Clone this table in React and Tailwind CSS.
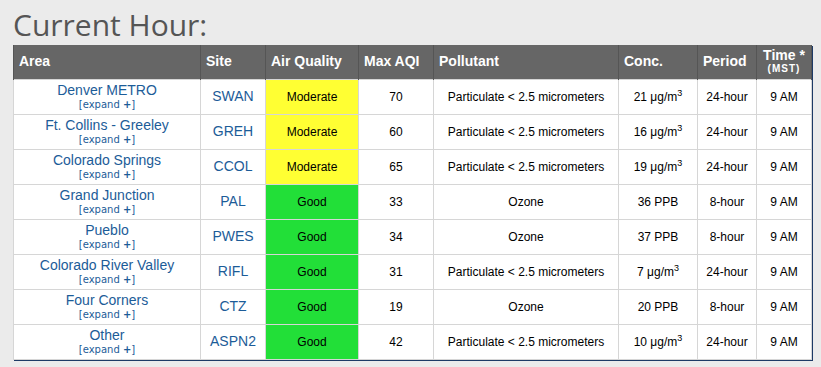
import React from 'react';

const rows = [
  { area: 'Denver METRO', site: 'SWAN', aq: 'Moderate', aqi: 70, pol: 'Particulate < 2.5 micrometers', conc: '21', unit: 'ug', period: '24-hour' },
  { area: 'Ft. Collins - Greeley', site: 'GREH', aq: 'Moderate', aqi: 60, pol: 'Particulate < 2.5 micrometers', conc: '16', unit: 'ug', period: '24-hour' },
  { area: 'Colorado Springs', site: 'CCOL', aq: 'Moderate', aqi: 65, pol: 'Particulate < 2.5 micrometers', conc: '19', unit: 'ug', period: '24-hour' },
  { area: 'Grand Junction', site: 'PAL', aq: 'Good', aqi: 33, pol: 'Ozone', conc: '36', unit: 'ppb', period: '8-hour' },
  { area: 'Pueblo', site: 'PWES', aq: 'Good', aqi: 34, pol: 'Ozone', conc: '37', unit: 'ppb', period: '8-hour' },
  { area: 'Colorado River Valley', site: 'RIFL', aq: 'Good', aqi: 31, pol: 'Particulate < 2.5 micrometers', conc: '7', unit: 'ug', period: '24-hour' },
  { area: 'Four Corners', site: 'CTZ', aq: 'Good', aqi: 19, pol: 'Ozone', conc: '20', unit: 'ppb', period: '8-hour' },
  { area: 'Other', site: 'ASPN2', aq: 'Good', aqi: 42, pol: 'Particulate < 2.5 micrometers', conc: '10', unit: 'ug', period: '24-hour' },
];

const th = 'h-[34px] p-0 pl-[5px] text-left align-middle font-bold text-[14px] text-white border-x border-[#555]';
const td = 'h-[35px] p-0 text-center align-middle border border-[#d6d6d6]';

export default function App() {
  return (
    <div className="w-[821px] h-[367px] bg-[#ebebeb] px-[13px] pt-[10px] font-['Liberation_Sans',Arial,sans-serif]">
      <h1 className="h-[30px] leading-[30px] mb-[5px] text-[30px] text-[#555] font-['Open_Sans',sans-serif]">
        Current Hour:
      </h1>

      <table className="w-[798px] table-fixed border-collapse bg-white shadow-[1px_1px_0_#1e3a66]">
        <colgroup>
          <col className="w-[187px]" />
          <col className="w-[65px]" />
          <col className="w-[93px]" />
          <col className="w-[75px]" />
          <col className="w-[185px]" />
          <col className="w-[79px]" />
          <col className="w-[59px]" />
          <col className="w-[55px]" />
        </colgroup>
        <thead>
          <tr className="bg-[#666]">
            <th className={th}>Area</th>
            <th className={th}>Site</th>
            <th className={th}>Air Quality</th>
            <th className={th}>Max AQI</th>
            <th className={th}>Pollutant</th>
            <th className={th}>Conc.</th>
            <th className={th}>Period</th>
            <th className="h-[34px] p-0 text-center align-middle font-bold text-white border-x border-[#555]">
              <div className="text-[14px] leading-[15px]">Time *</div>
              <div className="text-[10px] leading-[12px] tracking-[1px]">(MST)</div>
            </th>
          </tr>
        </thead>
        <tbody>
          {rows.map((r) => (
            <tr key={r.site}>
              <td className={td}>
                <div className="text-[14px] leading-[16px] text-[#1c5c98]">{r.area}</div>
                <div className="text-[10px] leading-[13px] text-[#1c5c98] font-['DejaVu_Sans',Verdana,sans-serif]">
                  [expand <b>+</b>]
                </div>
              </td>
              <td className={td + ' text-[14px] text-[#1c5c98]'}>{r.site}</td>
              <td className={td + ' text-[12px] text-black ' + (r.aq === 'Moderate' ? 'bg-[#ffff33]' : 'bg-[#22df38]')}>
                {r.aq}
              </td>
              <td className={td + ' text-[12px] text-black'}>{r.aqi}</td>
              <td className={td + ' text-[12px] text-black'}>{r.pol}</td>
              <td className={td + ' text-[12px] text-black'}>
                {r.unit === 'ug' ? (
                  <span>
                    {r.conc} μg/m<sup className="text-[9px]">3</sup>
                  </span>
                ) : (
                  <span>{r.conc} PPB</span>
                )}
              </td>
              <td className={td + ' text-[12px] text-black'}>{r.period}</td>
              <td className={td + ' text-[12px] text-black'}>9 AM</td>
            </tr>
          ))}
        </tbody>
      </table>
    </div>
  );
}
